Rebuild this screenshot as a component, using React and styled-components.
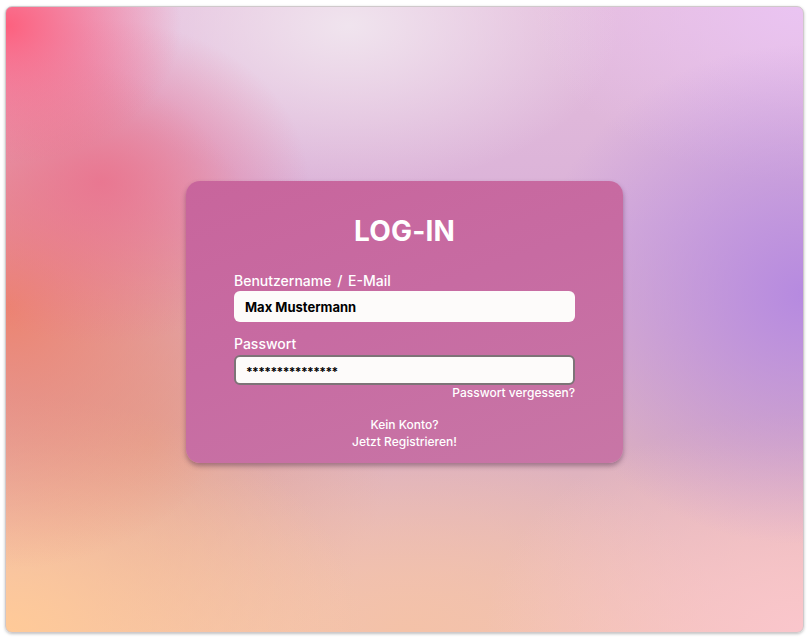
import React from "react";
import styled, { createGlobalStyle } from "styled-components";

const Global = createGlobalStyle`
  html, body { margin: 0; padding: 0; background: #ffffff; }
  body { font-family: "Inter", "Open Sans", sans-serif; }
  * { box-sizing: border-box; }
`;

const Page = styled.div`
  width: 809px;
  height: 639px;
  padding: 6px 5px 6px 5px;
  background: #ffffff;
`;

const Frame = styled.div`
  width: 100%;
  height: 100%;
  border: 1px solid #cfc9cb;
  border-radius: 7px;
  box-shadow: 0 1px 3px rgba(0, 0, 0, 0.25);
  overflow: hidden;
  display: flex;
  align-items: center;
  justify-content: center;
  padding-top: 5px;
  background:
    radial-gradient(ellipse 22% 22% at 0% 3%, rgba(253, 96, 126, 1) 0%, rgba(253, 96, 126, 0) 100%),
    radial-gradient(ellipse 26% 26% at 12% 28%, rgba(234, 112, 140, 0.85) 0%, rgba(234, 112, 140, 0) 100%),
    radial-gradient(ellipse 34% 42% at 0% 48%, rgba(236, 132, 112, 1) 0%, rgba(236, 132, 112, 0) 100%),
    radial-gradient(ellipse 34% 26% at 43% 3%, rgba(240, 228, 238, 1) 0%, rgba(240, 228, 238, 0) 100%),
    radial-gradient(ellipse 34% 40% at 100% 46%, rgba(182, 138, 224, 1) 0%, rgba(182, 138, 224, 0) 100%),
    radial-gradient(ellipse 34% 28% at 100% 0%, rgba(234, 196, 242, 1) 0%, rgba(234, 196, 242, 0) 100%),
    radial-gradient(ellipse 45% 38% at 0% 100%, rgba(255, 202, 152, 1) 0%, rgba(255, 202, 152, 0) 100%),
    radial-gradient(ellipse 40% 35% at 100% 100%, rgba(250, 198, 204, 1) 0%, rgba(250, 198, 204, 0) 100%),
    radial-gradient(ellipse 40% 30% at 50% 100%, rgba(244, 194, 168, 1) 0%, rgba(244, 194, 168, 0) 100%),
    radial-gradient(ellipse 30% 40% at 18% 70%, rgba(228, 162, 140, 0.8) 0%, rgba(228, 162, 140, 0) 100%),
    linear-gradient(180deg, #e4bcdc 0%, #dab2d8 35%, #dcb0c0 70%, #f0c2b6 100%);
`;

const Card = styled.div`
  width: 437px;
  height: 282px;
  border-radius: 14px;
  background: linear-gradient(160deg, #c8659c 0%, #c76ba2 45%, #c876a6 100%);
  box-shadow: 0 3px 5px rgba(80, 40, 70, 0.45);
  padding: 33px 48px 13px;
  display: flex;
  flex-direction: column;
  font-family: "Inter", "Open Sans", sans-serif;
  color: #ffffff;
`;

const Title = styled.h1`
  margin: 0 0 24px;
  font-size: 28px;
  line-height: 34px;
  font-weight: 700;
  text-align: center;
  letter-spacing: 0.2px;
`;

const Label = styled.label`
  display: block;
  font-size: 14px;
  line-height: 18px;
  font-weight: 500;
  word-spacing: 2px;
  margin-bottom: ${(p) => p.$gap}px;
`;

const Field = styled.input`
  display: block;
  width: 341px;
  height: ${(p) => (p.$outlined ? 30 : 31)}px;
  border-radius: 6px;
  border: ${(p) => (p.$outlined ? "2px solid #7d7377" : "none")};
  background: #fdfbfa;
  padding: ${(p) => (p.$outlined ? "3px 10px 0" : "0 11px")};
  font-family: "Inter", "Open Sans", sans-serif;
  font-size: ${(p) => (p.$outlined ? 12 : 13)}px;
  font-weight: 700;
  color: #000000;
  outline: none;
  margin-bottom: ${(p) => p.$mb}px;
  letter-spacing: ${(p) => (p.$outlined ? "-0.6px" : "0")};
`;

const Forgot = styled.a`
  align-self: flex-end;
  font-size: 12px;
  line-height: 16px;
  font-weight: 500;
  color: #ffffff;
  text-decoration: none;
  margin-bottom: 16px;
`;

const Footer = styled.div`
  display: flex;
  flex-direction: column;
  align-items: center;
  gap: 1px;
`;

const FooterText = styled.span`
  font-size: 12px;
  line-height: 16px;
  font-weight: 500;
  color: #ffffff;
`;

export default function App() {
  return (
    <>
      <Global />
      <Page>
        <Frame>
          <Card>
            <Title>LOG-IN</Title>
            <Label $gap={1}>Benutzername / E-Mail</Label>
            <Field $mb={13} readOnly value="Max Mustermann" />
            <Label $gap={2}>Passwort</Label>
            <Field $outlined $mb={0} readOnly value="***************" />
            <Forgot href="#">Passwort vergessen?</Forgot>
            <Footer>
              <FooterText>Kein Konto?</FooterText>
              <FooterText>Jetzt Registrieren!</FooterText>
            </Footer>
          </Card>
        </Frame>
      </Page>
    </>
  );
}
